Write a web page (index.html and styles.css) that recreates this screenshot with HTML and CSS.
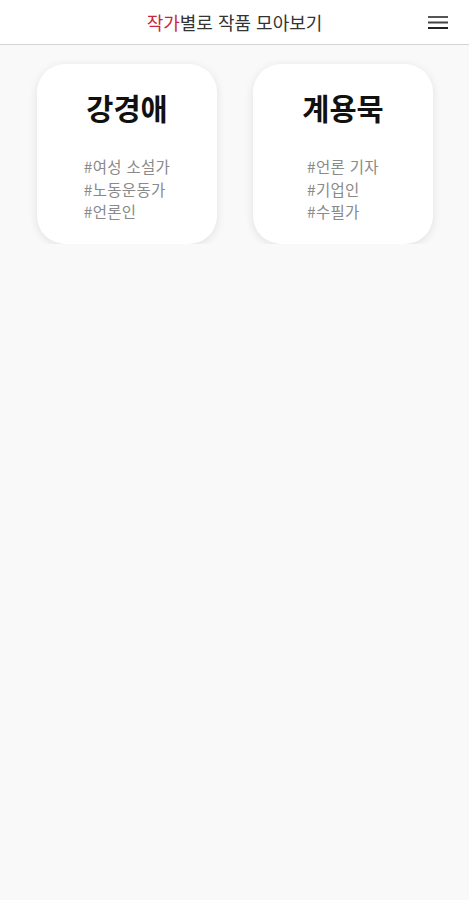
FILE: index.html
```html
<!DOCTYPE html>
<html lang="ko">
<head>
<meta charset="utf-8">
<title>작가별로 작품 모아보기</title>
<link rel="stylesheet" href="styles.css">
</head>
<body>
<header class="topbar">
  <h1 class="topbar-title"><span class="accent">작가</span>별로 작품 모아보기</h1>
  <button class="menu-btn" aria-label="메뉴">
    <svg width="20" height="16" viewBox="0 0 20 16"><rect x="0" y="2" width="20" height="2" fill="#555"/><rect x="0" y="7.5" width="20" height="2" fill="#444"/><rect x="0" y="13" width="20" height="2" fill="#222"/></svg>
  </button>
</header>
<main class="grid">
  <article class="card">
    <h2 class="card-name">강경애</h2>
    <ul class="tags">
      <li>#여성 소설가</li>
      <li>#노동운동가</li>
      <li>#언론인</li>
    </ul>
  </article>
  <article class="card">
    <h2 class="card-name">계용묵</h2>
    <ul class="tags">
      <li>#언론 기자</li>
      <li>#기업인</li>
      <li>#수필가</li>
    </ul>
  </article>
</main>
</body>
</html>
```
FILE: styles.css
```css
* { box-sizing: border-box; }
html, body {
  margin: 0;
  padding: 0;
  background: #f9f9f9;
  font-family: "Noto Sans CJK KR", "Noto Sans", sans-serif;
}
.topbar {
  position: relative;
  height: 45px;
  background: #fff;
  border-bottom: 1px solid #d4d4d4;
  display: flex;
  align-items: center;
  justify-content: center;
}
.topbar-title {
  margin: 0;
  font-size: 18px;
  font-weight: 400;
  color: #333;
  letter-spacing: 0;
}
.accent { color: #c8283c; }
.menu-btn {
  position: absolute;
  right: 21px;
  top: 14px;
  background: none;
  border: 0;
  padding: 0;
  width: 20px;
  height: 16px;
  display: block;
}
.menu-btn svg { display: block; }
.grid {
  display: grid;
  grid-template-columns: 180px 180px;
  column-gap: 36px;
  justify-content: center;
  padding-top: 19px;
  padding-left: 1px;
}
.card {
  height: 180px;
  background: #fff;
  border-radius: 28px;
  box-shadow: 0 2px 10px rgba(0,0,0,0.10);
  display: flex;
  flex-direction: column;
  align-items: center;
  padding-top: 23px;
}
.card-name {
  margin: 0;
  font-size: 29.5px;
  font-weight: 700;
  color: #111;
  line-height: 40px;
}
.tags {
  list-style: none;
  margin: 28px 0 0;
  padding: 0;
  font-size: 15.5px;
  line-height: 22.5px;
  letter-spacing: 0.3px;
  color: #8a8a8a;
}
```
